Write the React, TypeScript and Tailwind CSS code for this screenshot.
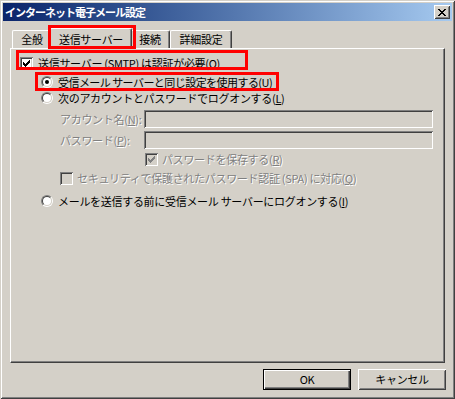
import React from "react";

const raised =
  "shadow-[inset_1px_1px_#ffffff,inset_-1px_-1px_#404040,inset_2px_2px_#d4d0c8,inset_-2px_-2px_#808080]";
const sunken =
  "shadow-[inset_1px_1px_#808080,inset_-1px_-1px_#ffffff,inset_2px_2px_#404040,inset_-2px_-2px_#d4d0c8]";
const dim = "text-[#808080] [text-shadow:1px_1px_0_#ffffff]";

function Key({ k }: { k: string }) {
  return (
    <>
      (<span className="underline underline-offset-[1px]">{k}</span>)
    </>
  );
}

function CheckMark({ color }: { color: string }) {
  // classic 7x7 pixel tick
  const cols: [number, number][] = [
    [3, 5],
    [4, 6],
    [5, 7],
    [6, 6],
    [7, 5],
    [8, 4],
    [9, 3],
  ];
  return (
    <svg width="13" height="13" viewBox="0 0 13 13" className="absolute left-0 top-0" shapeRendering="crispEdges">
      {cols.map(([x, y]) => (
        <rect key={x} x={x} y={y} width="1" height="3" fill={color} />
      ))}
    </svg>
  );
}

function Check({ checked, disabled }: { checked?: boolean; disabled?: boolean }) {
  return (
    <div
      className={`relative w-[13px] h-[13px] shrink-0 ${sunken} ${disabled ? "bg-[#d4d0c8]" : "bg-white"}`}
    >
      {checked && <CheckMark color={disabled ? "#808080" : "#000000"} />}
    </div>
  );
}

function Radio({ on }: { on?: boolean }) {
  return (
    <div className="w-[12px] h-[12px] shrink-0 rounded-full border border-t-[#808080] border-l-[#808080] border-b-white border-r-white">
      <div className="w-full h-full rounded-full bg-white border border-t-[#404040] border-l-[#404040] border-b-[#d4d0c8] border-r-[#d4d0c8] flex items-center justify-center">
        {on && <div className="w-[4px] h-[4px] rounded-full bg-black" />}
      </div>
    </div>
  );
}

function Field() {
  return <div className={`w-[289px] h-[18px] bg-[#d4d0c8] ${sunken}`} />;
}

function Tab({ label, w, selected }: { label: string; w: string; selected?: boolean }) {
  if (selected) {
    return (
      <div className={`relative z-10 -mx-[2px] -mb-px h-[21px] ${w} flex items-center justify-center bg-[#d4d0c8] border-l border-t border-white border-r border-r-[#404040] rounded-t-[2px] shadow-[inset_-1px_0_#808080]`}>
        {label}
      </div>
    );
  }
  return (
    <div className={`h-[18px] ${w} flex items-center justify-center border-l border-t border-white border-r border-r-[#404040] rounded-t-[2px] shadow-[inset_-1px_0_#808080]`}>
      {label}
    </div>
  );
}

export default function App() {
  return (
    <div
      className="relative w-[455px] h-[399px] bg-[#d4d0c8] p-[3px] flex flex-col text-[11px] leading-[13px] tracking-[-0.3px] text-black whitespace-nowrap shadow-[inset_1px_1px_#d4d0c8,inset_-1px_-1px_#404040,inset_2px_2px_#ffffff,inset_-2px_-2px_#808080]"
      style={{ fontFamily: '"Noto Sans CJK JP", "Noto Sans", sans-serif' }}
    >
      {/* title bar */}
      <div className="h-[18px] flex items-center justify-between bg-linear-to-r from-[#0a246a] to-[#a6caf0] pl-[2px] pr-[2px]">
        <span className="text-white font-bold text-[11px] tracking-[-1px]">インターネット電子メール設定</span>
        <div className={`w-[16px] h-[14px] bg-[#d4d0c8] ${raised} flex items-center justify-center`}>
          <svg width="8" height="7" viewBox="0 0 8 7" shapeRendering="crispEdges">
            <path d="M0 0h2v1H0zM6 0h2v1H6zM1 1h2v1H1zM5 1h2v1H5zM2 2h4v1H2zM3 3h2v1H3zM2 4h4v1H2zM1 5h2v1H1zM5 5h2v1H5zM0 6h2v1H0zM6 6h2v1H6z" fill="#000" />
          </svg>
        </div>
      </div>

      {/* tabs */}
      <div className="mt-[7px] h-[20px] ml-[9px] flex items-end">
        <Tab label="全般" w="w-[40px]" />
        <Tab label="送信サーバー" w="w-[82px]" selected />
        <Tab label="接続" w="w-[40px]" />
        <Tab label="詳細設定" w="w-[62px]" />
      </div>

      {/* panel */}
      <div className="mx-[7px] h-[315px] border-l border-t border-white border-r border-b border-r-[#404040] border-b-[#404040] shadow-[inset_-1px_-1px_#808080] pl-[9px] pt-[8px] flex flex-col">
        <div className="h-[13px] flex items-center gap-[5px]">
          <Check checked />
          <span>
            送信サーバー (SMTP) は認証が必要<Key k="O" />
          </span>
        </div>

        <div className="mt-[6px] ml-[21px] h-[12px] flex items-center gap-[5px]">
          <Radio on />
          <span className="tracking-[-0.55px]">
            受信メール サーバーと同じ設定を使用する<Key k="U" />
          </span>
        </div>

        <div className="mt-[4px] ml-[21px] h-[12px] flex items-center gap-[5px]">
          <Radio />
          <span>
            次のアカウントとパスワードでログオンする<Key k="L" />
          </span>
        </div>

        <div className="mt-[6px] ml-[40px] h-[18px] flex items-center">
          <span className={`w-[84px] ${dim}`}>
            アカウント名<Key k="N" />:
          </span>
          <Field />
        </div>

        <div className="mt-[3px] ml-[40px] h-[18px] flex items-center">
          <span className={`w-[84px] ${dim}`}>
            パスワード<Key k="P" />:
          </span>
          <Field />
        </div>

        <div className="mt-[4px] ml-[125px] h-[13px] flex items-center gap-[4px]">
          <Check checked disabled />
          <span className={dim}>
            パスワードを保存する<Key k="R" />
          </span>
        </div>

        <div className="mt-[6px] ml-[40px] h-[13px] flex items-center gap-[4px]">
          <Check disabled />
          <span className={dim}>
            セキュリティで保護されたパスワード認証 (SPA) に対応<Key k="Q" />
          </span>
        </div>

        <div className="mt-[10px] ml-[21px] h-[12px] flex items-center gap-[5px]">
          <Radio />
          <span>
            メールを送信する前に受信メール サーバーにログオンする<Key k="I" />
          </span>
        </div>
      </div>

      {/* buttons */}
      <div className="mt-[6px] h-[21px] flex justify-end gap-[7px] pr-[6px]">
        <button className="w-[88px] h-[21px] border border-black bg-[#d4d0c8] shadow-[inset_1px_1px_#ffffff,inset_-1px_-1px_#404040,inset_-2px_-2px_#808080] text-[11px]">
          OK
        </button>
        <button className={`w-[88px] h-[21px] bg-[#d4d0c8] ${raised} text-[11px]`}>キャンセル</button>
      </div>

      {/* red annotation boxes */}
      <div className="absolute z-20 left-[48px] top-[25px] w-[88px] h-[24px] border-[3px] border-[#ff0000] pointer-events-none" />
      <div className="absolute z-20 left-[16px] top-[50px] w-[232px] h-[20px] border-[3px] border-[#ff0000] pointer-events-none" />
      <div className="absolute z-20 left-[35px] top-[72px] w-[244px] h-[19px] border-[3px] border-[#ff0000] pointer-events-none" />
    </div>
  );
}
